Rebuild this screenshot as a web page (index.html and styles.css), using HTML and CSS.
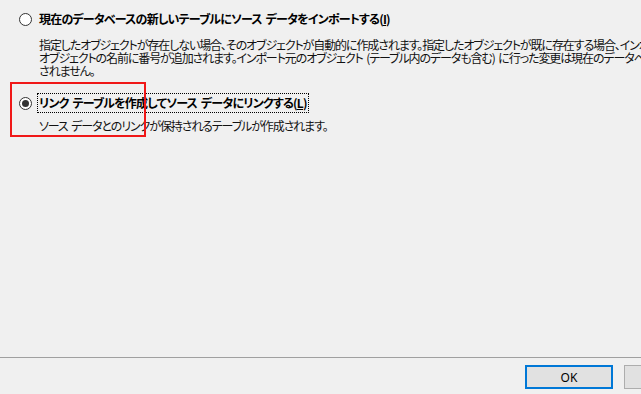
FILE: index.html
```html
<!DOCTYPE html>
<html lang="ja">
<head>
  <meta charset="UTF-8" />
  <title>外部データの取り込み</title>
  <link rel="stylesheet" href="styles.css">
</head>
<body>
  <div class="dialog">
    <div class="options">
      <!-- インポート -->
      <div class="option">
        <div class="option-label">
          <span class="radio"></span>
          <span class="label-text">現在のデータベースの新しいテーブルにソース データをインポートする(<u>I</u>)</span>
        </div>
        <p class="option-desc">指定したオブジェクトが存在しない場合、そのオブジェクトが自動的に作成されます。指定したオブジェクトが既に存在する場合、インポートしたオブジェクトの<br>オブジェクトの名前に番号が追加されます。インポート元のオブジェクト (テーブル内のデータも含む) に行った変更は現在のデータベースには反映<br>されません。</p>
      </div>

      <!-- リンク -->
      <div class="option option-link">
        <div class="option-label">
          <span class="radio checked"></span>
          <span class="label-text focused">リンク テーブルを作成してソース データにリンクする(<u>L</u>)</span>
        </div>
        <p class="option-desc">ソース データとのリンクが保持されるテーブルが作成されます。</p>
      </div>

      <div class="highlight"></div>
    </div>

    <div class="footer">
      <button class="btn btn-default">OK</button>
      <button class="btn btn-cancel">キャンセル</button>
    </div>
  </div>
</body>
</html>
```

FILE: styles.css
```css
* { margin: 0; padding: 0; box-sizing: border-box; }

html, body {
  width: 641px;
  height: 394px;
  overflow: hidden;
}

body {
  font-family: "Noto Sans CJK JP", "Noto Sans", sans-serif;
  font-size: 12px;
  font-feature-settings: "palt";
  color: #000;
  background: #f0f0f0;
}

.dialog {
  width: 740px;
  height: 394px;
  display: flex;
  flex-direction: column;
}

/* Option list */
.options {
  flex: 1;
  position: relative;
  padding: 9px 0 0 19px;
}

.option-label {
  display: flex;
  align-items: center;
  height: 20px;
}

.radio {
  width: 13px;
  height: 13px;
  border: 1px solid #333;
  border-radius: 50%;
  background: #fff;
  display: flex;
  align-items: center;
  justify-content: center;
  margin-right: 7px;
  flex-shrink: 0;
}
.radio.checked::after {
  content: "";
  width: 7px;
  height: 7px;
  border-radius: 50%;
  background: #333;
}

.label-text {
  font-weight: bold;
  letter-spacing: -0.8px;
  word-spacing: 2px;
  white-space: nowrap;
  line-height: 18px;
  padding: 0 1px;
  margin-left: -1px;
}
.label-text.focused { outline: 1px dotted #000; outline-offset: 0; }

.option-desc {
  white-space: nowrap;
  letter-spacing: -1.1px;
  word-spacing: 2px;
  line-height: 13px;
  padding: 9px 0 0 20px;
  color: #111;
}

.option-link { margin-top: 16px; }
.option-link .option-desc { padding-top: 6px; }

/* Red annotation box */
.highlight {
  position: absolute;
  left: 10px;
  top: 82px;
  width: 136px;
  height: 55px;
  border: 2px solid #f01818;
}

/* Buttons */
.footer {
  height: 37px;
  border-top: 1px solid #a0a0a0;
  display: flex;
  justify-content: flex-start;
  gap: 11px;
  padding: 7px 0 0 525px;
}

.btn {
  width: 88px;
  height: 24px;
  font-family: "Noto Sans", "Noto Sans CJK JP", sans-serif;
  font-size: 12px;
  color: #000;
  background: #e1e1e1;
  border: 1px solid #adadad;
}
.btn-default { border: 2px solid #0078d7; }
.btn-cancel { width: 110px; }
```
